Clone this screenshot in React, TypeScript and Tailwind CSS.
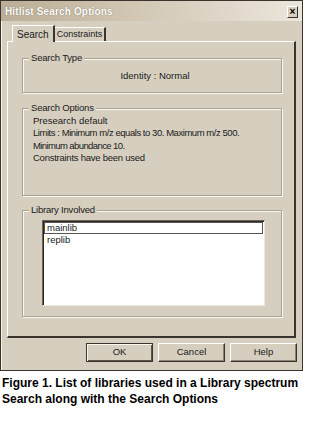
import React from "react";

const font = { fontFamily: '"Liberation Sans", Arial, sans-serif' };

function GroupBox({ label, className, children }: { label: string; className?: string; children?: React.ReactNode }) {
  return (
    <div className={"relative border border-[#a8a090] shadow-[inset_1px_1px_0_#fbf8f0,1px_1px_0_#fbf8f0] " + (className ?? "")}>
      <span className="absolute left-[6px] top-[-7px] bg-[#d6cfc0] px-[2px] text-[9.5px] leading-[12px] tracking-[-0.2px] text-[#1a1a1a]">{label}</span>
      {children}
    </div>
  );
}

export default function App() {
  return (
    <div className="w-[324px] h-[427px] bg-white" style={font}>
      <div className="w-[303px] h-[371px] border border-[#3a342c] bg-[#d6cfc0] flex flex-col shadow-[inset_1px_1px_0_#f4f0e6]">
        {/* title bar */}
        <div className="h-[20px] shrink-0 flex items-center justify-between pl-[4px] pr-[4px] pt-[1px] bg-gradient-to-r from-[#bcae96] via-[#d4cab8] to-[#ebe6dc]">
          <span className="text-white font-bold text-[10px] tracking-[0.15px] [text-shadow:0_0_1px_#6e624e]">Hitlist Search Options</span>
          <div className="w-[11px] h-[12px] bg-[#d6cfc0] border border-t-white border-l-white border-r-[#3a342c] border-b-[#3a342c] flex items-center justify-center text-[10px] font-bold leading-none text-black">×</div>
        </div>
        {/* tabs */}
        <div className="flex pl-[11px] h-[20px] shrink-0 items-end">
          <div className="h-[17px] px-[4px] border-t border-l border-white border-r-2 border-r-[#3a342c] flex items-center text-[10px] text-[#1a1a1a] relative z-10 bg-[#d6cfc0] mb-[-1px]">Search</div>
          <div className="h-[14px] px-[2px] border-t border-white border-r-2 border-r-[#3a342c] flex items-center text-[9px] text-[#1a1a1a]">Constraints</div>
        </div>
        {/* panel */}
        <div className="mx-[6px] h-[297px] shrink-0 border-t border-l border-white border-r-2 border-r-[#3a342c] border-b-2 border-b-[#3a342c] pl-[14px] pr-[12px] pt-[16px] flex flex-col">
          <GroupBox label="Search Type" className="h-[35px] flex items-center justify-center">
            <span className="text-[9.5px] text-[#1a1a1a] pt-[1px] pl-[6px]">Identity : Normal</span>
          </GroupBox>
          <GroupBox label="Search Options" className="mt-[15px] h-[88px] pl-[10px] pt-[6px]">
            <div className="text-[9.5px] leading-[12.3px] text-[#1a1a1a]">
              <div>Presearch default</div>
              <div className="tracking-[-0.45px]">Limits : Minimum m/z equals to 30. Maximum m/z 500.</div>
              <div className="tracking-[-0.6px]">Minimum abundance 10.</div>
              <div className="tracking-[-0.25px]">Constraints have been used</div>
            </div>
          </GroupBox>
          <GroupBox label="Library Involved" className="mt-[14px] h-[107px] pl-[19px] pr-[16px] pt-[9px]">
            <div className="h-[86px] bg-white border border-t-[#6a6458] border-l-[#6a6458] border-r-[#ece8df] border-b-[#ece8df] shadow-[inset_1px_1px_0_#2a2620] pl-[1px] pr-[1px] pt-[1px] text-[9.5px] leading-[10px] text-[#1a1a1a]">
              <div className="border border-[#555] h-[12px] pl-[2px] leading-[10px]">mainlib</div>
              <div className="pl-[3px] leading-[11px] text-[#1a1a1a]">replib</div>
            </div>
          </GroupBox>
        </div>
        {/* buttons */}
        <div className="flex justify-end gap-[5px] pr-[5px] pt-[5px]">
          {["OK", "Cancel", "Help"].map((b, i) => (
            <div
              key={b}
              className={
                "w-[67px] h-[19px] flex items-center justify-center text-[9.5px] text-[#1a1a1a] border " +
                (i === 0
                  ? "border-[#3a342c] shadow-[inset_1px_1px_0_#fbf8f0,inset_-1px_-1px_0_#5a544a]"
                  : "border-t-white border-l-white border-r-[#3a342c] border-b-[#3a342c] shadow-[inset_-1px_-1px_0_#8a8478]")
              }
            >
              {b}
            </div>
          ))}
        </div>
      </div>
      <div className="pl-[2px] pt-[4px] font-bold text-[12px] leading-[16px] text-black" style={{ fontFamily: '"Liberation Sans", Arial, sans-serif' }}>
        <div>Figure 1. List of libraries used in a Library spectrum</div>
        <div>Search along with the Search Options</div>
      </div>
    </div>
  );
}
